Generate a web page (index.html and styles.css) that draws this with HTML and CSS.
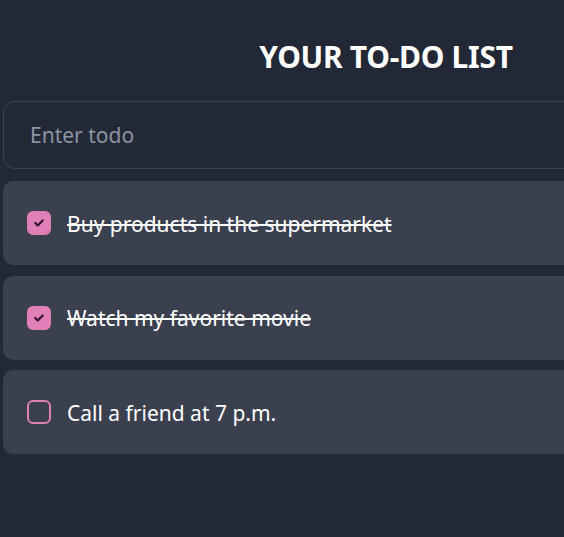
FILE: index.html
```html
<!DOCTYPE html>
<html lang="en">
<head>
<meta charset="utf-8">
<title>Todo</title>
<link rel="stylesheet" href="styles.css">
</head>
<body>
<main class="app">
  <h1 class="title">YOUR TO-DO LIST</h1>
  <input class="todo-input" type="text" placeholder="Enter todo">
  <ul class="list">
    <li class="item done">
      <span class="check checked"><svg viewBox="0 0 24 24" width="22" height="22"><path d="M7.5 12l3 3 6-6" fill="none" stroke="#34182e" stroke-width="2.7" stroke-linecap="round" stroke-linejoin="round"/></svg></span>
      <span class="label">Buy products in the supermarket</span>
    </li>
    <li class="item done">
      <span class="check checked"><svg viewBox="0 0 24 24" width="22" height="22"><path d="M7.5 12l3 3 6-6" fill="none" stroke="#34182e" stroke-width="2.7" stroke-linecap="round" stroke-linejoin="round"/></svg></span>
      <span class="label">Watch my favorite movie</span>
    </li>
    <li class="item">
      <span class="check"></span>
      <span class="label">Call a friend at 7 p.m.</span>
    </li>
  </ul>
</main>
</body>
</html>
```
FILE: styles.css
```css
html, body {
  margin: 0;
  padding: 0;
  background: #222836;
  overflow: hidden;
}
body {
  font-family: "Noto Sans", "Open Sans", sans-serif;
  color: #fff;
}
.app {
  width: 766px;
  margin-left: 3px;
  padding-top: 37px;
}
.title {
  margin: 0;
  text-align: center;
  font-size: 30px;
  font-weight: 700;
  line-height: 40px;
  letter-spacing: -0.3px;
  color: #fff;
}
.todo-input {
  display: block;
  box-sizing: border-box;
  width: 100%;
  height: 68px;
  margin-top: 24px;
  padding: 0 26px;
  background: #222836;
  border: 1.5px solid #3d4352;
  border-radius: 12px;
  font-family: inherit;
  font-size: 21px;
  color: #fff;
  outline: none;
}
.todo-input::placeholder {
  color: #8c93a1;
}
.list {
  list-style: none;
  margin: 12px 0 0;
  padding: 0;
  display: flex;
  flex-direction: column;
  gap: 10.5px;
}
.item {
  height: 84px;
  box-sizing: border-box;
  background: #3b404f;
  border-radius: 10px;
  display: flex;
  align-items: center;
  padding-left: 24px;
  gap: 16px;
}
.check {
  width: 24px;
  height: 24px;
  box-sizing: border-box;
  border: 2px solid #e17fb8;
  border-radius: 6px;
  display: flex;
  align-items: center;
  justify-content: center;
  flex: none;
}
.check.checked {
  background: #e17fb8;
}
.label {
  font-size: 21px;
  color: #fff;
  line-height: 28px;
  padding-top: 1px;
}
.done .label {
  text-decoration: line-through;
}
```
